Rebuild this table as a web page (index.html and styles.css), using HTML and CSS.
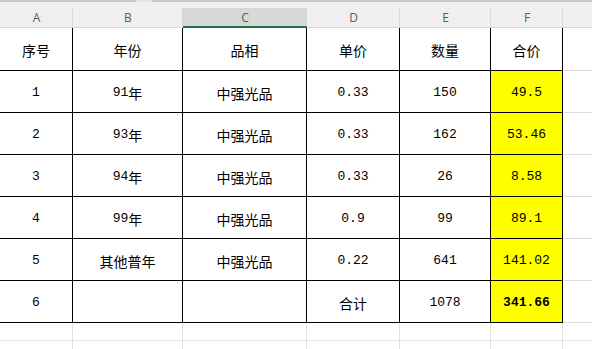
FILE: index.html
```html
<!DOCTYPE html>
<html>
<head>
<meta charset="utf-8">
<link rel="stylesheet" href="styles.css">
</head>
<body>
<div class="topbar"><span class="notch"></span></div>
<div class="sheet">
  <div class="ch">A</div><div class="ch">B</div><div class="ch sel">C</div><div class="ch">D</div><div class="ch">E</div><div class="ch">F</div><div class="ch last"></div>

  <div class="c">序号</div><div class="c">年份</div><div class="c">品相</div><div class="c">单价</div><div class="c">数量</div><div class="c">合价</div><div class="g"></div>

  <div class="c n">1</div><div class="c"><span class="n">91</span>年</div><div class="c">中强光品</div><div class="c n">0.33</div><div class="c n">150</div><div class="c n y">49.5</div><div class="g"></div>
  <div class="c n">2</div><div class="c"><span class="n">93</span>年</div><div class="c">中强光品</div><div class="c n">0.33</div><div class="c n">162</div><div class="c n y">53.46</div><div class="g"></div>
  <div class="c n">3</div><div class="c"><span class="n">94</span>年</div><div class="c">中强光品</div><div class="c n">0.33</div><div class="c n">26</div><div class="c n y">8.58</div><div class="g"></div>
  <div class="c n">4</div><div class="c"><span class="n">99</span>年</div><div class="c">中强光品</div><div class="c n">0.9</div><div class="c n">99</div><div class="c n y">89.1</div><div class="g"></div>
  <div class="c n">5</div><div class="c">其他普年</div><div class="c">中强光品</div><div class="c n">0.22</div><div class="c n">641</div><div class="c n y">141.02</div><div class="g"></div>
  <div class="c n">6</div><div class="c"></div><div class="c"></div><div class="c">合计</div><div class="c n">1078</div><div class="c n y b">341.66</div><div class="g"></div>

  <div class="e"></div><div class="e"></div><div class="e"></div><div class="e"></div><div class="e"></div><div class="e"></div><div class="e last"></div>
  <div class="e"></div><div class="e"></div><div class="e"></div><div class="e"></div><div class="e"></div><div class="e"></div><div class="e last"></div>
</div>
</body>
</html>
```
FILE: styles.css
```css
html, body {
  margin: 0;
  padding: 0;
  background: #ffffff;
  overflow: hidden;
}
body {
  width: 592px;
  height: 349px;
  font-family: "Noto Sans CJK SC", "Noto Sans", sans-serif;
}
.topbar {
  height: 2px;
  background: #c8c8c8;
  position: relative;
}
.notch {
  position: absolute;
  left: 136px;
  top: 0;
  width: 16px;
  height: 2px;
  background: #e4e4e4;
}
.sheet {
  display: grid;
  grid-template-columns: 73px 110px 124px 93px 91px 72px 1fr;
  grid-template-rows: 26px 43px repeat(6, 42px) 18px 18px;
}
.ch {
  background: #efefef;
  border-bottom: 1px solid #d6d6d6;
  box-sizing: border-box;
  position: relative;
  display: flex;
  align-items: center;
  justify-content: center;
  padding-top: 6px;
  font-family: "Open Sans", "Liberation Sans", sans-serif;
  font-size: 12px;
  color: #5a5a5a;
}
.ch::after {
  content: "";
  position: absolute;
  right: 0;
  top: 6px;
  bottom: 0;
  width: 1px;
  background: #d8d8d8;
}
.ch.last::after { display: none; }
.ch.sel {
  color: #217346;
  border-bottom: 2px solid #217346;
  background: linear-gradient(#efefef 0, #efefef 6px, #d8d8d8 6px);
}
.c {
  border-right: 1px solid #000;
  border-bottom: 1px solid #000;
  display: flex;
  align-items: center;
  justify-content: center;
  font-size: 14px;
  color: #000;
  padding-top: 2px;
  box-sizing: border-box;
}
.n {
  font-family: "Liberation Mono", monospace;
  font-size: 13px;
}
.y { background: #ffff00; }
.b { font-weight: bold; }
.g {
  border-bottom: 1px solid #dedede;
}
.e {
  border-right: 1px solid #e0e0e0;
  border-bottom: 1px solid #e0e0e0;
}
.e.last { border-right: none; }
```
